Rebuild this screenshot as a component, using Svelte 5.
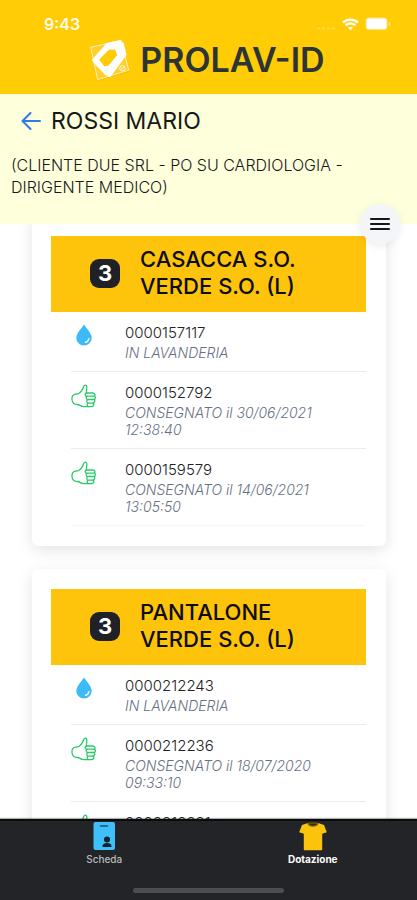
<script>
  const cards = [
    {
      count: 3,
      title: 'CASACCA S.O. VERDE S.O. (L)',
      items: [
        { code: '0000157117', state: 'laundry', note: 'IN LAVANDERIA' },
        { code: '0000152792', state: 'delivered', note: 'CONSEGNATO il 30/06/2021 12:38:40' },
        { code: '0000159579', state: 'delivered', note: 'CONSEGNATO il 14/06/2021 13:05:50' }
      ]
    },
    {
      count: 3,
      title: 'PANTALONE VERDE S.O. (L)',
      items: [
        { code: '0000212243', state: 'laundry', note: 'IN LAVANDERIA' },
        { code: '0000212236', state: 'delivered', note: 'CONSEGNATO il 18/07/2020 09:33:10' },
        { code: '0000212221', state: 'delivered' }
      ]
    }
  ];
</script>

<div class="app">
  <header class="top">
    <div class="status">
      <span class="time">9:43</span>
      <span class="signals">
        <svg width="20" height="14" viewBox="0 0 20 14" aria-hidden="true">
          <path d="M1 11.5H19" stroke="#fff" stroke-opacity=".25" stroke-width="2" stroke-dasharray="3 2" />
        </svg>
        <svg width="17" height="13" viewBox="0 0 17 13" aria-hidden="true" fill="none" stroke="#fff" stroke-width="2.3">
          <path d="M1 4.6C5.2.6 11.8.6 16 4.6M3.7 7.4c2.8-2.6 6.8-2.6 9.6 0" />
          <path d="M8.500 12.300 5.800 9.600c1.500-1.300 3.900-1.300 5.400 0z" fill="#fff" stroke="none" />
        </svg>
        <svg width="26" height="14" viewBox="0 0 26 14" aria-hidden="true">
          <rect x=".5" y=".5" width="22" height="12.500" rx="3.500" fill="#fff" fill-opacity=".45" />
          <rect x="1.500" y="1.500" width="20" height="10.500" rx="2" fill="#fff" />
          <path d="M24 4.500v5c1.800-.8 1.800-4.200 0-5z" fill="#fff" fill-opacity=".6" />
        </svg>
      </span>
    </div>
    <div class="brand">
      <svg width="44" height="44" viewBox="264 112 132 132" aria-hidden="true">
        <path d="M270 143 364 121 386 214 293 241z" fill="#c79a00" fill-opacity=".3" />
        <path d="M272 140 364 119 386 209 293 237z" fill="#ffd02a" stroke="#fff" stroke-opacity=".85" stroke-width="2.500" />
        <path fill-rule="evenodd" fill="#fff" d="M276 177 320 127 358 119 371 127 380 162 331 230 316 223 279 185zM298 177 327 147 345 147 351 163 326 194 313 197z" />
        <path d="M298 177 327 147 345 147 351 163 326 194 313 197z" fill="#ffcc05" />
        <circle cx="367" cy="203" r="8" fill="none" stroke="#fff" stroke-width="2.500" />
        <path d="M363 206l8-6" stroke="#fff" stroke-width="2.500" />
      </svg>
      <span class="name">PROLAV-ID</span>
    </div>
  </header>

  <section class="person">
    <div class="heading">
      <button class="back" aria-label="Indietro">
        <svg width="20" height="18" viewBox="0 0 20 18" fill="none" stroke="#3478ee" stroke-width="2" stroke-linecap="round" stroke-linejoin="round">
          <path d="M9.500 1 1.500 9l8 8M2 9h17" />
        </svg>
      </button>
      <h1>ROSSI MARIO</h1>
    </div>
    <p>(CLIENTE DUE SRL - PO SU CARDIOLOGIA - DIRIGENTE MEDICO)</p>
    <button class="menu" aria-label="Menu">
      <svg width="20" height="14" viewBox="0 0 20 14" stroke="#15161a" stroke-width="2" stroke-linecap="round">
        <path d="M1 2h18M1 7h18M1 12h18" />
      </svg>
    </button>
  </section>

  <main>
    <div class="list">
      {#each cards as card}
        <article class="card">
          <div class="banner">
            <span class="count">{card.count}</span>
            <h2>{card.title}</h2>
          </div>
          <ul>
            {#each card.items as item}
              <li>
                <span class="icon">
                  {#if item.state === 'laundry'}
                    <svg width="26" height="22" viewBox="0 0 26 22" aria-hidden="true">
                      <path d="M13 0.500C15.500 4.500 20.700 9.500 20.700 14A7.700 7.500 0 0 1 5.300 14C5.300 9.500 10.500 4.500 13 .5z" fill="#3dbaf8" />
                      <path d="M14.500 18.300c1.900-.4 3.100-1.700 3.400-3.600" fill="none" stroke="#fff" stroke-width="1.400" stroke-linecap="round" />
                    </svg>
                  {:else}
                    <svg width="26" height="25" viewBox="0 0 26 25" aria-hidden="true" fill="none" stroke="#2dc96b" stroke-width="1.300" stroke-linejoin="round" stroke-linecap="round">
                      <path d="M15.500 9C15.200 7.500 16 5 15.800 2.500c-.2-1.700-2.300-1.900-3-.2C11.900 5 10.700 7.600 8.200 9.200 7 10 5.700 9.900 4.200 10.200 2 10.800.8 13 1 15.500c.3 3.500 2.300 5 5.300 5 2.200 0 3.200 1.900 6 2.100h8.100c2.400 0 2.900-2.600 1.500-3.500 2-.3 2.500-2.700 1-3.600 1.900-.4 2-2.900.4-3.500 1.400-.9.700-3-1.500-3z" />
                      <path d="M15.500 9c-1.800.5-2 3 .3 3.200h7.200M16.500 12.200c-2 .6-1.700 3.200.3 3.300h5.800M17 15.500c-1.800.6-1.500 3.400.4 3.600h4.200M17.200 19.100c-1.300.5-1.500 2.700 0 3.500" />
                    </svg>
                  {/if}
                </span>
                <div class="text">
                  <span class="code">{item.code}</span>
                  {#if item.note}<em>{item.note}</em>{/if}
                </div>
              </li>
            {/each}
          </ul>
        </article>
      {/each}
    </div>
  </main>

  <footer>
    <nav>
      <a href="#scheda">
        <svg width="28" height="30" viewBox="0 0 28 30" aria-hidden="true">
          <rect x="3.500" y="1" width="21.500" height="28" rx="2" fill="#3fc0fb" />
          <path d="M10.500 5h7" stroke="#17536f" stroke-width="1.600" stroke-linecap="round" />
          <circle cx="17" cy="18.500" r="3" fill="#14242d" />
          <path d="M12.500 26v-1c0-2 2-3 4.500-3s4.500 1 4.500 3v1z" fill="#14242d" />
        </svg>
        <span>Scheda</span>
      </a>
      <a href="#dotazione" class="active">
        <svg width="28" height="30" viewBox="0 0 28 30" aria-hidden="true">
          <path d="M9 2 3 4 .2 11.200l4.600 1.600v15.400c0 .8.400 1 1 1h16.400c.6 0 1-.4 1-1V12.800l4.600-1.600L25 4 19 2c-1 4-9 4-10 0z" fill="#fcc30d" />
          <path d="M9 2.200c1.500 3.800 8.500 3.800 10 0M9.500 2.200h9" fill="none" stroke="#7a5c10" stroke-width="1.300" />
        </svg>
        <span>Dotazione</span>
      </a>
    </nav>
    <div class="home"></div>
  </footer>
</div>

<style>
  :global(body) {
    margin: 0;
    background: #fff;
  }
  .app {
    height: 100vh;
    display: flex;
    flex-direction: column;
    overflow: hidden;
    font-family: Inter, 'Liberation Sans', sans-serif;
    color: #17181a;
  }
  h1, h2, p, ul {
    margin: 0;
    padding: 0;
    font-weight: 400;
  }
  button {
    border: 0;
    padding: 0;
    background: none;
    display: flex;
    align-items: center;
    justify-content: center;
    cursor: pointer;
  }
  svg {
    display: block;
    flex: none;
  }
  .top {
    flex: none;
    background: #ffcc05;
    padding-bottom: 12px;
  }
  .status {
    display: flex;
    align-items: center;
    justify-content: space-between;
    height: 38px;
    padding: 10px 26px 0 44px;
    box-sizing: border-box;
  }
  .time {
    color: #fffbe8;
    font-size: 16px;
    line-height: 20px;
    font-weight: 600;
  }
  .signals {
    display: flex;
    align-items: center;
    gap: 6px;
  }
  .brand {
    display: flex;
    align-items: center;
    justify-content: center;
    gap: 8px;
    height: 44px;
    padding-right: 4px;
  }
  .name {
    font-size: 34px;
    line-height: 40px;
    font-weight: 600;
    color: #2d3436;
  }
  .person {
    position: relative;
    z-index: 1;
    flex: none;
    padding: 12px 11px 26px;
    background: #feffdb;
  }
  .heading {
    display: flex;
    align-items: center;
    gap: 10px;
    padding-left: 10px;
    margin-bottom: 18px;
  }
  h1 {
    font-size: 23px;
    line-height: 30px;
  }
  p {
    font-size: 16px;
    line-height: 22px;
    font-weight: 300;
  }
  .menu {
    position: absolute;
    right: 17px;
    bottom: -20px;
    width: 40px;
    height: 40px;
    border-radius: 50%;
    background: #f4f5f9;
    box-shadow: 0 2px 8px rgba(0, 0, 0, 0.08);
  }
  main {
    flex: 1;
    min-height: 0;
    overflow: hidden;
  }
  .list {
    display: flex;
    flex-direction: column;
    gap: 23px;
    margin-top: -8px;
    padding: 0 31px 0 32px;
  }
  .card {
    background: #fff;
    border-radius: 6px;
    padding: 20px 20px 20px 19px;
    box-shadow: 0 4px 16px rgba(0, 0, 0, 0.11);
  }
  .banner {
    display: flex;
    align-items: center;
    gap: 20px;
    padding: 10px 50px 11px 39px;
    background: #fec30b;
    color: #0d0d0d;
  }
  .count {
    flex: none;
    width: 30px;
    height: 29px;
    border-radius: 9px;
    background: #1f2126;
    color: #fff;
    font-size: 22px;
    line-height: 29px;
    font-weight: 700;
    text-align: center;
  }
  h2 {
    font-size: 22px;
    line-height: 27px;
    font-weight: 500;
    padding-bottom: 1px;
  }
  ul {
    list-style: none;
    padding-left: 20px;
  }
  li {
    display: flex;
    gap: 28px;
    padding: 10px 40px 10px 0;
    border-bottom: 1px solid #ebebeb;
  }
  li:last-child {
    border-color: #f6f6f6;
  }
  .icon {
    flex: none;
    width: 26px;
    padding-top: 2px;
  }
  .text {
    display: flex;
    flex-direction: column;
  }
  .code {
    font-size: 15px;
    line-height: 22px;
    font-weight: 300;
    color: #222224;
  }
  em {
    font-size: 14px;
    line-height: 17px;
    font-weight: 300;
    color: #667082;
  }
  footer {
    position: relative;
    z-index: 1;
    flex: none;
    background: #232428;
    border-top: 2px solid #0b0b0c;
    padding-bottom: 7px;
    box-shadow: 0 -1px 1px rgba(0, 0, 0, 0.3);
  }
  nav {
    display: flex;
    height: 67px;
  }
  nav a {
    flex: 1;
    display: flex;
    flex-direction: column;
    align-items: center;
    color: #b9babd;
    font-size: 10px;
    line-height: 16px;
    font-weight: 500;
    text-decoration: none;
  }
  nav a.active {
    color: #fff;
    font-weight: 700;
  }
  .home {
    width: 36%;
    height: 5px;
    margin: 0 auto;
    border-radius: 3px;
    background: #4c4d50;
  }
</style>
